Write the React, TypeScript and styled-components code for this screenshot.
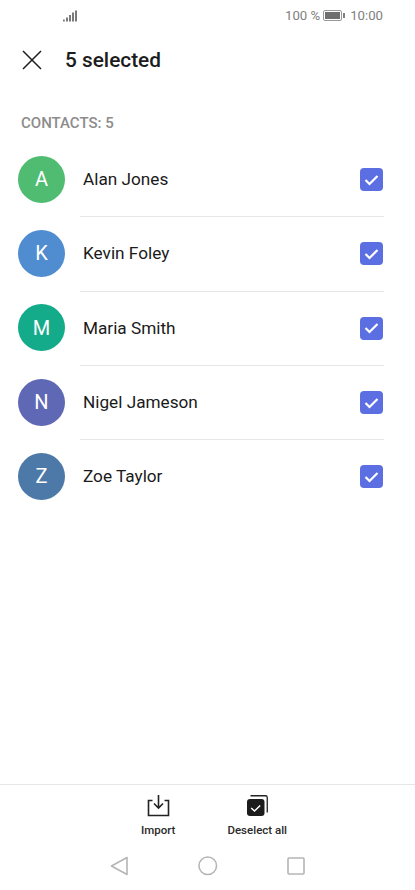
import React from 'react';
import styled, { createGlobalStyle } from 'styled-components';

const GlobalStyle = createGlobalStyle`
  * { box-sizing: border-box; }
  html, body { margin: 0; padding: 0; background: #fff; }
  body { font-family: Roboto, "Liberation Sans", sans-serif; }
`;

const contacts = [
  { name: 'Alan Jones', letter: 'A', color: '#4fbc72' },
  { name: 'Kevin Foley', letter: 'K', color: '#4f8dd0' },
  { name: 'Maria Smith', letter: 'M', color: '#14ab8b' },
  { name: 'Nigel Jameson', letter: 'N', color: '#5e68b5' },
  { name: 'Zoe Taylor', letter: 'Z', color: '#4d79a8' },
];

const Page = styled.div`
  width: 415px;
  height: 890px;
  display: flex;
  flex-direction: column;
  background: #fff;
  overflow: hidden;
`;

const StatusBar = styled.div`
  height: 31px;
  padding: 0 32px 0 63px;
  display: flex;
  align-items: center;
  justify-content: space-between;
  color: #808080;
  font-size: 13.2px;
`;

const StatusRight = styled.div`
  display: flex;
  align-items: center;
`;

const Battery = styled.svg`
  margin: 0 5px 0 3px;
`;

const Header = styled.div`
  height: 57px;
  padding-left: 22px;
  display: flex;
  align-items: center;
  gap: 23px;
`;

const Title = styled.div`
  font-size: 20.8px;
  font-weight: 500;
  color: #1c1c1c;
`;

const SectionLabel = styled.div`
  margin-top: 26px;
  padding-left: 21px;
  height: 18px;
  line-height: 18px;
  font-size: 15px;
  font-weight: 500;
  color: #8c8c8c;
`;

const List = styled.div`
  margin-top: 11px;
  flex: 1;
`;

const Row = styled.div`
  height: 74.3px;
  padding-left: 18px;
  display: flex;
  align-items: center;
`;

const Avatar = styled.div<{ $color: string }>`
  width: 47px;
  height: 47px;
  flex: none;
  margin-bottom: 2px;
  border-radius: 50%;
  background: ${props => props.$color};
  color: #fff;
  font-size: 20px;
  display: flex;
  align-items: center;
  justify-content: center;
`;

const RowBody = styled.div<{ $last: boolean }>`
  margin-left: 15px;
  margin-right: 31px;
  flex: 1;
  height: 100%;
  padding-left: 3px;
  display: flex;
  align-items: center;
  justify-content: space-between;
  border-bottom: 1px solid ${props => (props.$last ? 'transparent' : '#e6e6e6')};
`;

const Name = styled.div`
  margin-bottom: 1px;
  font-size: 17.2px;
  color: #1a1a1a;
`;

const CheckBox = styled.div`
  width: 23px;
  height: 23px;
  margin-right: 1px;
  border-radius: 4px;
  background: #5b6fe3;
  display: flex;
  align-items: center;
  justify-content: center;
`;

const BottomBar = styled.div`
  height: 65px;
  border-top: 1px solid #e6e6e6;
  padding-left: 141px;
  display: flex;
  gap: 52px;
`;

const Action = styled.div`
  display: flex;
  flex-direction: column;
  align-items: center;
  padding-top: 9px;
  gap: 6px;
  font-size: 11.5px;
  font-weight: 500;
  color: #2a2a2a;
`;

const ActionIcon = styled.svg`
  width: 23px;
  height: 23px;
`;

const NavBar = styled.div`
  height: 41px;
  padding: 0 0 7px 110px;
  display: flex;
  align-items: center;
  gap: 69px;
`;

const App = () => (
  <Page>
    <GlobalStyle />
    <StatusBar>
      <svg width="14" height="12" viewBox="0 0 14 12" fill="#7a7a7a">
        <rect x="0" y="9.5" width="1.8" height="2" />
        <rect x="3" y="7.5" width="2" height="4" />
        <rect x="6" y="5" width="2" height="6.5" />
        <rect x="9" y="2.5" width="2" height="9" />
        <rect x="12" y="0.5" width="2" height="11" />
      </svg>
      <StatusRight>
        <span>100 %</span>
        <Battery width="22" height="11" viewBox="0 0 22 11">
          <rect x="0.5" y="0.5" width="18" height="10" rx="1.5" fill="none" stroke="#999" />
          <rect x="2" y="2" width="15" height="7" fill="#6f6f6f" />
          <rect x="20" y="3" width="2" height="5" fill="#808080" />
        </Battery>
        <span>10:00</span>
      </StatusRight>
    </StatusBar>
    <Header>
      <svg width="20" height="20" viewBox="0 0 20 20" fill="none" stroke="#1c1c1c" strokeWidth="1.5">
        <path d="M1 1 L19 19 M19 1 L1 19" />
      </svg>
      <Title>5 selected</Title>
    </Header>
    <SectionLabel>CONTACTS: 5</SectionLabel>
    <List>
      {contacts.map((c, i) => (
        <Row key={c.name}>
          <Avatar $color={c.color}>{c.letter}</Avatar>
          <RowBody $last={i === contacts.length - 1}>
            <Name>{c.name}</Name>
            <CheckBox>
              <svg width="15" height="12" viewBox="0 0 15 12" fill="none" stroke="#fff" strokeWidth="2.2">
                <path d="M1.5 6 L5.5 10 L13.5 2" />
              </svg>
            </CheckBox>
          </RowBody>
        </Row>
      ))}
    </List>
    <BottomBar>
      <Action>
        <ActionIcon viewBox="0 0 23 23" fill="none" stroke="#222" strokeWidth="1.6">
          <path d="M5.5 6.5 H1.5 V21.5 H21.5 V6.5 H17.5" />
          <path d="M11.5 1 V14 M7 9.5 L11.5 14 L16 9.5" />
        </ActionIcon>
        <span>Import</span>
      </Action>
      <Action>
        <ActionIcon viewBox="-1 -1 23 23" fill="none">
          <path d="M3.5 0.75 H18.5 Q20.25 0.75 20.25 2.5 V17.5" stroke="#222" strokeWidth="1.3" />
          <rect x="0" y="4" width="17.5" height="17" rx="3" fill="#1c1c1c" />
          <path d="M4.2 13 L7.5 16 L13.2 10.5" stroke="#fff" strokeWidth="1.5" />
        </ActionIcon>
        <span>Deselect all</span>
      </Action>
    </BottomBar>
    <NavBar>
      <svg width="19" height="20" viewBox="0 0 19 20" fill="none" stroke="#b5b5b5" strokeWidth="1.6">
        <path d="M17 1.5 V18.5 L1.5 10 Z" strokeLinejoin="round" />
      </svg>
      <svg width="19.5" height="19.5" viewBox="0 0 20 20" fill="none" stroke="#b5b5b5" strokeWidth="1.6">
        <circle cx="10" cy="10" r="9" />
      </svg>
      <svg width="18" height="18" viewBox="0 0 18 18" fill="none" stroke="#b5b5b5" strokeWidth="1.6">
        <rect x="1" y="1" width="16" height="16" rx="1" />
      </svg>
    </NavBar>
  </Page>
);

export default App;
